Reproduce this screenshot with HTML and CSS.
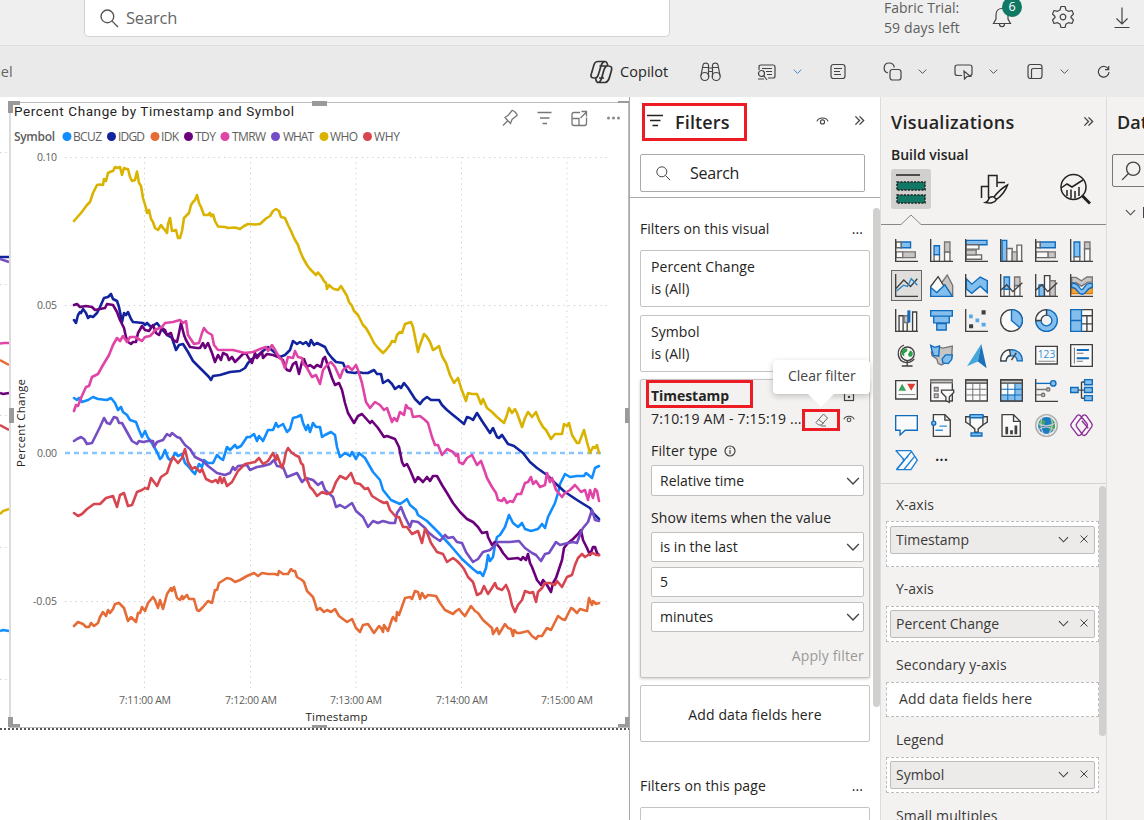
FILE: index.html
```html
<!DOCTYPE html>
<html lang="en">
<head>
<meta charset="utf-8">
<title>Power BI report</title>
<link rel="stylesheet" href="styles.css">
</head>
<body>
<svg class="defs" width="0" height="0">
  <symbol id="chev" viewBox="0 0 12 12"><path d="M1 3.5 6 8.5 11 3.5"/></symbol>
  <symbol id="dbl" viewBox="0 0 12 12"><path d="M1.5 1.5 6 6 1.5 10.5M6 1.5 10.5 6 6 10.5"/></symbol>
  <symbol id="lens" viewBox="0 0 18 18"><circle cx="7" cy="7" r="6"/><path d="M11.5 11.5 17 17"/></symbol>
  <symbol id="eye" viewBox="0 0 14 10"><path d="M1 5.5C2.5 0.5 11.5 0.5 13 5.5"/><circle cx="7" cy="6" r="2.2"/></symbol>
  <symbol id="x" viewBox="0 0 10 10"><path d="M1.5 1.5 8.500 8.500M8.500 1.500 1.500 8.500"/></symbol>
</svg>

<header class="topbar">
  <div class="search"><svg class="i-lens" width="19" height="19"><use href="#lens"/></svg><span>Search</span></div>
  <div class="trial"><span class="t1">Fabric Trial:</span><span class="t2">59 days left</span></div>
  <div class="bell">
    <svg class="ln" width="20" height="22" viewBox="0 0 20 22"><path d="M10 1.500C6 1.500 4 4.500 4 8v4l-2.500 4.500h17L16 12V8C16 4.500 14 1.500 10 1.500ZM7.500 17c0 3.500 5 3.500 5 0"/></svg>
    <span class="badge">6</span>
  </div>
  <svg class="ln gear" width="22" height="24" viewBox="-11 -12 22 24"><path d="M-2-10.500H2L3-7 5.500-5.700 9-6.500 10.500-3 8-0.500V0.500L10.500 3 9 6.500 5.500 5.700 3 7 2 10.500H-2L-3 7-5.500 5.700-9 6.500-10.500 3-8 0.500V-0.500L-10.500-3-9-6.500-5.500-5.700-3-7Z" stroke-linejoin="round"/><circle r="2.800"/></svg>
  <svg class="ln down" width="16" height="22" viewBox="0 0 16 22"><path d="M8 .5V17M2.500 11.500 8 17l5.500-5.500M.5 20.500h15"/></svg>
</header>

<nav class="ribbon">
  <span class="del">del</span>
  <svg class="ln cop" width="24" height="24" viewBox="0 0 24 24"><path d="M9 1.500h7c2 0 2.300 1.500 2.800 4M9 1.500C5 1.500 5 5 3.500 10 2 15 .5 17.500 4.500 18H7M10.500 6h9c4 0 3.500 3 2.500 6-1.500 5-2 10.500-6 10.500H9.500c-3 0-2-2-3-4.500M15.500 2c-3 0-3.500 4-5 9-1.500 5-2 7-4.500 7M18.500 6c-3 0-3.500 4-5 9-1 4-1.500 7-4 7.500M10 18h5"/></svg>
  <span class="coptxt">Copilot</span>
  <svg class="ln g1" width="21" height="20" viewBox="0 0 21 20"><circle cx="4.800" cy="14.500" r="4"/><circle cx="16.200" cy="14.500" r="4"/><path d="M1 13.500 3 3C3.500.5 8 .5 8.500 3v12M20 13.500 18 3C17.500.5 13 .5 12.500 3v12M8.500 6h4M8.500 9.500h4M3 5.500h5.500M12.500 5.500H18"/></svg>
  <svg class="ln g2" width="20" height="18" viewBox="0 0 20 18"><path d="M2 7V4c0-1.500.5-2 2-2h12c1.500 0 2 .5 2 2v9c0 1.500-.5 2-2 2h-5M5 5.500h10M9 8.500h6M10 11.500h5"/><circle cx="4.500" cy="10.500" r="3"/><path d="M6.500 12.500 10 17M1 16h6"/></svg>
  <svg class="ln g3 blue" width="9" height="9"><use href="#chev"/></svg>
  <svg class="ln g4" width="16" height="17" viewBox="0 0 16 17"><rect x="1" y="1.500" width="14" height="14" rx="2.500"/><path d="M4 5.500h8M4 8.500h6M4 11.500h7"/></svg>
  <svg class="ln g5" width="19" height="19" viewBox="0 0 19 19"><rect x="7" y="7.500" width="11" height="10.500" rx="2.500"/><path d="M5 11C-.5 9.500 0 1 6 1c3.500 0 5 2 5.300 4.500"/></svg>
  <svg class="ln g3" width="9" height="9"><use href="#chev"/></svg>
  <svg class="ln g6" width="19" height="17" viewBox="0 0 19 17"><path d="M8 12.500H3.500C2 12.500 1 12 1 10.500V4C1 2.500 2 2 3.500 2h12C17 2 18 2.500 18 4v6.500c0 1.500-.5 2-2 2M10 8l.5 8 2.500-2.500h3.500Z"/></svg>
  <svg class="ln g3" width="9" height="9"><use href="#chev"/></svg>
  <svg class="ln g7" width="16" height="17" viewBox="0 0 16 17"><rect x="1" y="1.500" width="14" height="14" rx="2.500"/><path d="M4.500 15.500v-8c0-1.500.5-2 2-2H15"/></svg>
  <svg class="ln g8" width="9" height="9"><use href="#chev"/></svg>
  <svg class="ln g9" width="13" height="13" viewBox="0 0 13 13"><path d="M11.500 4.500A5.300 5.300 0 1 0 12 7M11.700 1v3.700H8"/></svg>
</nav>

<main class="work">
  <section class="canvas">
    <svg class="chart" width="629" height="723" viewBox="0 97 629 723">
      <g class="other">
        <path class="grid" d="M0 152.500H8M0 284.500H8M0 415.500H8M0 547.500H8M0 679.500H8"/>
        <path stroke="#12239e" d="M0 257H9"/><path stroke="#744ec2" d="M0 259 9 262"/><path stroke="#e044a7" d="M0 343.500 4 343H9"/><path stroke="#e66c37" d="M0 360 9 365"/><path stroke="#6b007b" d="M0 393 3 394 9 393"/><path stroke="#d64550" d="M0 425 9 430"/><path stroke="#d9b300" d="M0 514 3 511 9 509"/><path stroke="#118dff" d="M0 631 3 630 9 631"/>
      </g>
      <path d="M10 103V727" stroke="#dcdcdc" stroke-width="2" fill="none"/>
      <path d="M9 102.500H629M9 727.500H629M628.500 102V728" stroke="#bdbdbd" fill="none"/>
      <path d="M0 729H629" stroke="#555" stroke-width="2" stroke-dasharray="2 2" fill="none"/>
      <g fill="#9a9a9a">
        <path d="M8 101h12v4h-7v8H8ZM312 101h15v5H312ZM618 101h11v2H618ZM8 717h5v7h7v3H8ZM312 725h15v3H312ZM629 717h-4v7h-7v3h11ZM9 408h5v15H9ZM625 408h4v15h-4Z"/>
      </g>
      <text class="ctitle" x="14" y="116" textLength="280">Percent Change by Timestamp and Symbol</text>
      <g class="leg">
        <text x="14" y="141" font-weight="600" textLength="41">Symbol</text>
        <circle cx="67" cy="136.500" r="4.500" fill="#118dff"/><text x="73" y="141" textLength="29">BCUZ</text>
        <circle cx="111.500" cy="136.500" r="4.500" fill="#12239e"/><text x="118" y="141" textLength="27">IDGD</text>
        <circle cx="155" cy="136.500" r="4.500" fill="#e66c37"/><text x="161" y="141" textLength="18">IDK</text>
        <circle cx="188.500" cy="136.500" r="4.500" fill="#6b007b"/><text x="195" y="141" textLength="21">TDY</text>
        <circle cx="225" cy="136.500" r="4.500" fill="#e044a7"/><text x="232" y="141" textLength="34">TMRW</text>
        <circle cx="275.500" cy="136.500" r="4.500" fill="#744ec2"/><text x="283" y="141" textLength="31">WHAT</text>
        <circle cx="324" cy="136.500" r="4.500" fill="#d9b300"/><text x="330" y="141" textLength="28">WHO</text>
        <circle cx="367.500" cy="136.500" r="4.500" fill="#d64550"/><text x="374" y="141" textLength="26">WHY</text>
      </g>
      <g class="tools">
        <path d="M503 125.500 507.500 121M505 117.500l5.500 6 1.500-4 5-4c1-.8-4-6-5-5l-3.500 4.500ZM537.500 112.500h14M540 118h9.500M542.500 123.500h4.500"/>
        <path d="M580 112.500h-6c-1.500 0-2 .5-2 2v9c0 1.500.5 2 2 2h10.500c1.500 0 2-.5 2-2v-6M572 118.500h7v7M580.500 118 586.500 112M581.500 111.500h5v5"/>
        <g class="dots"><circle cx="608.500" cy="118" r="1.500"/><circle cx="613.500" cy="118" r="1.500"/><circle cx="618.500" cy="118" r="1.500"/></g>
      </g>
      <path class="grid" d="M65 157.500H608M65 305.500H608M65 601.500H608M144.500 157V692M250.500 157V692M356 157V692M461.500 157V692M567 157V692"/>
      <g class="ax">
        <text x="37" y="161" textLength="20">0.10</text><text x="37" y="309" textLength="20">0.05</text><text x="37" y="457" textLength="20">0.00</text><text x="33" y="605" textLength="24">-0.05</text>
        <text x="119" y="704" textLength="52">7:11:00 AM</text><text x="225" y="704" textLength="52">7:12:00 AM</text><text x="330" y="704" textLength="52">7:13:00 AM</text><text x="436" y="704" textLength="52">7:14:00 AM</text><text x="541" y="704" textLength="52">7:15:00 AM</text>
      </g>
      <text class="axt" x="305.500" y="721" textLength="62">Timestamp</text>
      <text class="axt" transform="translate(25 467) rotate(-90)" textLength="88">Percent Change</text>
      <path d="M65 453H604" stroke="#118dff" stroke-opacity=".5" stroke-width="2.500" stroke-dasharray="5 4" fill="none"/>
      <g class="series">
        <polyline stroke="#118dff" points="74,398 77,400 79,398 82,402 85,401 88,400 93,397 98,399 107,400 111,398 115,403 118,410 121,407 123,412 127,415 130,420 136,422 139,430 142,437 145,431 148,438 150,440 153,445 157,452 160,459 162,457 165,450 168,458 170,460 172,459 175,453 178,456 182,454 185,463 189,467 192,471 195,474 199,464 202,467 204,460 208,463 213,463 217,455 220,458 223,460 227,447 230,450 235,445 237,448 241,446 247,437 250,437 254,434 257,441 259,436 263,441 268,430 273,430 276,423 278,427 283,424 287,432 290,429 293,418 297,417 301,415 303,423 306,430 308,425 310,432 313,423 316,427 320,427 322,437 325,435 331,432 335,435 337,447 340,457 345,453 350,456 352,452 356,459 359,453 365,458 369,465 373,472 380,480 383,490 391,500 400,504 403,502 407,499 410,505 416,510 418,515 427,521 438,532 450,545 462,559 473,569 478,573 480,572 483,576 486,568 488,555 490,561 493,557 495,545 497,537 500,535 505,527 509,515 513,523 518,527 522,523 525,529 531,531 538,529 542,524 545,528 548,517 555,503 558,493 560,484 565,474 570,477 577,476 584,476 586,473 592,478 595,468 599,466"/>
        <polyline stroke="#12239e" points="74,320 76,323 78,315 80,312 81,313 83,309 86,313 88,318 90,316 93,317 97,313 100,307 104,298 108,297 111,294 113,299 117,301 119,307 122,322 124,313 126,315 128,312 131,319 133,322 143,323 145,325 147,323 151,327 154,325 157,323 160,327 167,335 172,338 176,350 179,345 183,344 188,352 193,361 200,368 205,373 209,377 211,380 213,376 220,375 230,372 240,371 245,368 248,363 252,359 257,356 263,351 268,347 273,351 280,357 285,355 290,350 293,341 297,344 300,342 303,344 306,342 309,346 311,340 314,345 317,343 325,347 328,353 332,358 336,362 343,363 347,372 355,373 358,372 363,373 368,373 374,370 377,374 381,374 383,383 388,380 392,384 395,389 399,386 401,388 404,383 408,388 415,399 420,404 423,400 427,397 431,400 439,400 442,405 447,410 453,415 458,419 464,424 467,417 470,418 473,420 477,413 482,421 488,430 490,433 493,428 497,437 499,438 502,435 508,444 514,446 523,453 530,462 537,468 547,475 555,483 565,492 577,500 585,505 590,508 593,513 599,519"/>
        <polyline stroke="#e66c37" points="74,626 78,622 83,624 86,627 89,627 91,623 94,626 98,623 100,617 103,612 106,616 108,610 110,613 113,609 115,604 119,603 124,608 128,621 131,617 136,622 138,613 140,613 142,607 145,611 148,603 153,597 155,600 158,608 160,600 163,609 167,594 171,588 172,591 174,587 177,598 180,600 182,596 183,599 187,595 189,599 194,599 197,610 199,611 203,607 208,601 212,603 215,590 217,590 219,583 227,578 231,579 235,582 240,580 247,576 254,573 258,576 262,573 268,574 275,574 278,575 279,571 283,574 288,574 291,569 293,571 295,571 297,577 302,580 304,582 307,591 313,597 315,603 317,610 320,608 324,612 327,610 331,612 335,609 339,616 347,622 352,619 356,628 360,632 363,625 368,624 374,633 379,626 381,628 383,632 384,625 388,631 392,619 393,617 396,621 397,612 399,615 405,598 410,597 412,599 415,591 418,592 420,599 422,593 425,598 428,595 436,596 440,603 445,610 453,614 456,611 459,609 462,613 465,616 471,606 475,611 478,613 483,620 492,628 493,634 497,628 499,634 505,624 508,628 511,629 513,636 514,630 517,633 520,633 528,631 532,636 536,639 538,636 542,636 547,628 551,630 558,616 562,619 565,620 571,608 573,609 577,613 580,609 587,611 589,598 592,605 593,601 596,604 599,603"/>
        <polyline stroke="#6b007b" points="74,305 77,304 80,307 86,306 92,307 95,310 100,309 105,308 107,304 113,305 117,312 120,320 124,328 126,337 128,342 131,344 133,342 136,342 138,333 142,326 145,330 149,331 153,325 156,333 159,335 162,328 165,330 167,335 171,333 173,340 177,342 179,333 181,323 184,335 186,340 190,347 197,348 200,348 203,343 205,348 208,343 212,353 215,362 218,355 221,360 223,353 227,355 229,360 232,357 235,362 239,358 243,354 246,353 248,357 252,363 255,353 257,358 262,352 263,358 267,354 273,355 278,357 283,360 285,367 287,370 290,371 293,364 296,362 299,374 302,362 304,359 307,367 310,365 314,368 317,365 321,367 323,359 325,357 328,366 332,378 335,385 339,383 342,390 345,403 348,413 354,423 358,416 362,414 370,423 372,421 378,428 384,437 387,436 395,439 399,447 402,462 404,466 407,464 410,470 415,482 418,477 423,482 427,477 430,481 433,476 437,476 442,485 447,493 453,503 460,512 467,519 473,522 478,527 482,533 487,532 488,537 492,545 495,542 500,548 503,553 508,559 518,558 521,560 523,557 526,560 528,554 530,563 532,567 537,580 541,585 543,580 547,585 551,592 553,583 556,578 558,572 562,560 564,548 568,543 573,539 578,534 581,530 583,540 587,548 590,555 593,547 595,547 597,553 599,555"/>
        <polyline stroke="#e044a7" points="74,411 76,405 78,406 81,398 86,387 89,386 92,377 98,374 103,365 109,355 113,345 117,338 120,341 123,336 127,342 130,337 135,337 142,341 145,337 150,336 153,333 155,330 162,327 165,323 173,322 180,320 183,323 186,321 188,335 190,338 194,344 199,343 202,333 204,328 207,332 212,335 214,345 218,350 225,350 233,350 245,353 253,352 260,349 266,347 268,351 272,345 275,350 279,357 282,360 285,368 288,357 293,358 295,351 298,357 302,358 303,363 307,368 312,377 316,375 320,384 323,370 327,365 331,362 335,367 340,378 343,370 348,366 352,370 356,365 358,370 362,383 366,402 370,408 375,402 380,405 384,410 387,408 392,422 394,418 397,421 400,412 404,415 406,405 408,408 411,409 413,417 420,416 425,420 428,423 432,437 435,445 438,445 442,455 447,449 453,452 456,456 458,454 459,462 463,464 467,458 472,455 477,465 481,461 485,472 487,478 492,487 496,493 498,500 502,501 504,498 507,503 510,501 513,502 517,494 521,494 525,483 528,482 531,477 533,484 536,481 540,487 545,485 547,473 550,482 552,478 556,490 562,497 565,493 570,490 575,485 581,492 585,490 588,500 590,490 593,498 595,489 597,491 599,501"/>
        <polyline stroke="#744ec2" points="74,441 77,439 81,437 84,439 87,444 92,443 97,433 100,427 104,418 107,423 110,424 114,417 117,418 119,423 122,423 127,432 132,441 137,444 139,441 143,442 148,441 153,441 154,447 157,442 163,440 167,434 170,436 172,433 177,437 180,438 185,445 190,449 195,457 203,461 208,466 217,473 225,475 230,473 233,467 235,470 238,466 247,465 250,470 257,467 263,466 270,464 274,460 277,466 283,467 287,477 292,475 297,473 302,482 306,478 313,480 318,485 322,482 325,490 333,497 336,507 340,505 345,508 352,503 356,511 363,517 368,527 373,521 378,523 383,521 390,523 395,523 397,513 401,507 405,517 410,527 412,521 418,522 425,528 428,532 434,537 440,541 445,535 448,538 453,537 457,542 462,543 466,552 473,562 478,559 483,552 490,550 498,542 510,542 519,541 525,548 532,553 536,555 541,561 545,554 549,553 556,542 560,545 568,543 573,542 577,543 581,532 583,528 588,522 592,510 595,520 599,521"/>
        <polyline stroke="#d9b300" points="74,221 77,217.500 81,213 84,209 87,205 90,202 93,193 95,189 97,185 100,184.500 103,185 104,179 106,181 108,173 111,171.500 113,171 115,167 117,168 120,167 122,175 124,168 126,169 128,169 130,177 132,181 135,180 137,171.500 139,183 141,186 143,198 146,208 147,213 149,210 151,219 153,222 155,228 158,230 161,225 163,228 165,230 167,233 168,224 170,218 172,231 176,230 178,238 180,238 182,231 184,218 186,216 189,213 191,205 193,202 195,200 197,195 199,203 201,207 204,215 208,215 210,213 211,216 213,214.500 215,221 218,226.500 225,227 228,228 235,227.500 240,229 244,226 248,224 255,224.500 260,224 266,218.500 270,216 273,211 276,209 279,211 281,217 285,218 288,225 291,231 294,238 298,245 300,251 303,258 307,265 310,269 314,273 316,275 318,272.500 321,276 324,281 326,283 327,289 329,285 331,287 334,289 338,290 341,286 344,291 347,296 349,302 352,306 354,311 358,315 361,321 363,325 366,328 370,335 374,343 378,348 383,353 386,350 390,345 392,341 395,342 397,335 400,332 402,333 405,324 408,323 411,322 413,327 418,352 420,345 424,334 427,337 430,342 433,350 435,349 439,346 442,356 446,363 450,375 454,383 458,378 461,388 466,401 468,393 472,394 477,394 481,404 483,399 487,408 492,412 497,417 504,423 507,415 509,408 512,413 515,409 517,413 522,427 525,418 528,412 532,417 536,412 539,420 543,427 546,430 551,439 555,434 562,434 564,424 567,426 569,423 572,435 577,443 579,443 584,430 587,442 590,453 593,447 595,448 597,445 599,453"/>
        <polyline stroke="#d64550" points="74,513 78,516 82,514 87,509 94,504 100,504 106,498 113,496 117,507 120,495 124,493 128,506 132,505 137,492 142,490 145,488 148,489 151,478 157,486 161,477 167,473 170,464 173,457 178,463 182,458 185,449 188,462 192,469 195,467 200,472 202,469 206,479 212,482 216,480 218,483 220,477 222,483 224,478 227,486 232,482 238,471 245,464 250,463 255,462 259,458 263,464 268,461 273,453 276,460 277,455 282,468 284,462 286,452 288,448 291,452 295,455 299,457 301,463 303,465 305,477 308,482 310,487 313,490 317,496 322,492 327,494 332,492 336,482 340,476 346,479 351,473 355,483 360,484 365,489 368,488 372,496 380,501 384,503 387,502 390,510 396,517 399,517 403,527 407,527 412,534 418,531 422,543 425,529 428,535 431,543 437,552 443,554 447,562 453,558 457,561 460,564 464,569 468,577 473,582 477,595 481,593 484,586 488,594 492,588 495,583 497,588 502,590 506,585 509,592 512,605 515,612 518,605 522,600 525,591 530,593 533,592 536,602 538,592 542,588 545,583 550,583 555,585 557,581 562,587 567,577 572,575 575,565 578,558 582,554 585,557 588,555 593,553 596,555 599,555"/>
      </g>
    </svg>
  </section>

  <aside class="filters">
    <div class="fhead">
      <div class="red fbox"><svg class="ln thick" width="16" height="14" viewBox="0 0 16 14"><path d="M0 1.500h16M3 6.500h10.500M5.500 11.500h5.500"/></svg><b>Filters</b></div>
      <svg class="ln feye" width="13" height="10"><use href="#eye"/></svg>
      <svg class="ln fdbl" width="11" height="11"><use href="#dbl"/></svg>
    </div>
    <div class="fsearch"><svg class="ln" width="15" height="15"><use href="#lens"/></svg><span>Search</span></div>
    <div class="flist">
      <div class="fsec"><span class="s1">Filters on this visual</span><span class="el">...</span></div>
      <div class="card"><p>Percent Change</p><p>is (All)</p></div>
      <div class="card"><p>Symbol</p><p>is (All)</p></div>
      <div class="card open">
        <div class="row1"><b>Timestamp</b><svg class="ln" width="12" height="13" viewBox="0 0 12 13"><rect x="1.500" y="3.500" width="9" height="8"/><path d="M5.500 7.500h1v1h-1z"/></svg></div>
        <div class="row2"><span class="range">7:10:19 AM - 7:15:19 ...</span>
          <svg class="ln er" width="16" height="16" viewBox="0 0 16 16"><path d="M9.500 2 13.500 6 7.500 13H4.500L2 10.500ZM4.500 7.500 9.500 11.500M7 14h5"/></svg>
          <svg class="ln" width="12" height="10"><use href="#eye"/></svg></div>
        <div class="lab l1"><span class="wide">Filter type</span><svg class="ln" width="12" height="12" viewBox="0 0 12 12"><circle cx="6" cy="6" r="5"/><path d="M6 5v4M6 2.800v1.200"/></svg></div>
        <div class="sel"><span>Relative time</span><svg class="ln" width="14" height="14"><use href="#chev"/></svg></div>
        <div class="lab l2"><span class="show">Show items when the value</span></div>
        <div class="sel"><span>is in the last</span><svg class="ln" width="14" height="14"><use href="#chev"/></svg></div>
        <div class="sel"><span>5</span></div>
        <div class="sel"><span>minutes</span><svg class="ln" width="14" height="14"><use href="#chev"/></svg></div>
        <div class="apply"><span class="wide">Apply filter</span></div>
        <div class="red rts"></div><div class="red rer"></div>
        <div class="tip"><span>Clear filter</span></div>
      </div>
      <div class="card add"><span class="adf">Add data fields here</span></div>
      <div class="fsec page"><span class="wide">Filters on this page</span><span class="el">...</span></div>
      <div class="card last"></div>
    </div>
    <div class="fscroll"></div>
  </aside>

  <aside class="viz">
    <div class="vhead"><span class="v1">Visualizations</span><svg class="ln" width="11" height="11"><use href="#dbl"/></svg></div>
    <div class="build"><span class="v2">Build visual</span></div>
    <div class="tabs">
      <div class="tab on"><svg width="30" height="31" viewBox="0 0 30 31"><path d="M0 1h24" stroke="#222" stroke-width="1.500"/><path d="M1 8h28v8H1ZM1 21h28v8H1Z" fill="#117865" stroke="#222" stroke-width="1.500" stroke-dasharray="2.200 1.200"/></svg></div>
      <div class="tab"><svg class="ln tk shift" width="30" height="32" viewBox="0 0 30 32"><path d="M1.500 25V13.500h7V25M8.500 13.500V2.500H17V14M17 9.500h8M27.500 12C22 15 17 20 14 24l2.500 2.500C21 23 26 17 27.500 12ZM14 24c-3-.5-5 .5-5.500 2.500C8 28.500 7 29 5.500 29.500c4 1 9.500.5 11-3"/></svg></div>
      <div class="tab"><svg class="ln tk" width="31" height="32" viewBox="0 0 31 32"><circle cx="13.500" cy="14" r="12.500"/><path d="M1 15 7 11l5 3L23 7M7 23v-6M11 25.500v-9M15 25.500V18M19 23v-9"/><path d="M22 22.500 30 30.500" stroke-width="3"/></svg></div>
    </div>
    <svg class="notch" width="225" height="11" viewBox="0 0 225 11"><path d="M0 10.500H20L30 1 40 10.500H225" fill="none" stroke="#8a8886"/></svg>

    <div class="icons">
      <svg viewBox="0 0 68 68"><path class="b" d="M18 9h28v17H18z"/><path class="w" d="M3 9h15v17H3zM3 38h20v17H3z"/><path class="g" d="M23 38h37v17H23z"/><path class="d" d="M2 0V66H68"/></svg>
      <svg viewBox="0 0 68 68"><path class="g" d="M43 9h16v30H43z"/><path class="w" d="M12 46h16v20H12zM43 39h16v27H43z"/><path class="b" d="M12 20h16v26H12z"/><path class="d" d="M2 0V66H68"/></svg>
      <svg viewBox="0 0 68 68"><path class="b" d="M3 4h62v13H3z"/><path class="w" d="M3 17h38v13H3zM3 47h46v13H3z"/><path class="g" d="M3 33h30v14H3z"/><path class="d" d="M2 0V66H68"/></svg>
      <svg viewBox="0 0 68 68"><path class="b" d="M6 4h14v62H6z"/><path class="w" d="M20 28h16v38H20zM50 18h14v48H50z"/><path class="g" d="M36 38h14v28H36z"/><path class="d" d="M2 0V66H68"/></svg>
      <svg viewBox="0 0 68 68"><path class="b" d="M15 9h45v17H15z"/><path class="w" d="M3 9h12v17H3zM3 38h36v17H3z"/><path class="g" d="M39 38h21v17H39z"/><path class="d" d="M2 0V66H68"/></svg>
      <svg viewBox="0 0 68 68"><path class="b" d="M12 9h17v44H12z"/><path class="g" d="M43 9h16v20H43z"/><path class="w" d="M12 53h17v13H12zM43 29h16v37H43z"/><path class="d" d="M2 0V66H68"/></svg>

      <svg class="on" viewBox="0 0 68 68"><path class="d" d="M2 0V66H68M3 43 26 18 46 37 66 14"/><path d="M5 50 25 33 37 37 48 14 66 33" fill="none" stroke="#2a86c8" stroke-width="4"/></svg>
      <svg viewBox="0 0 68 68"><path class="g" d="M30 66V32L51 3 67 34V66z"/><path class="w dk" d="M2 37 24 8 45 42 30 66H2z"/><path class="b" d="M2 40 20 55 44 32 66 66H2z"/></svg>
      <svg viewBox="0 0 68 68"><path class="b" d="M4 14 20 30 45 9 66 20V55L45 36 20 57 4 44z"/><path class="d" d="M2 0V66H68"/></svg>
      <svg viewBox="0 0 68 68"><path class="g" d="M43 9h16v25H43z"/><path class="w" d="M12 45h16v21H12zM43 35h16v31H43z"/><path class="b" d="M12 9h16v36H12z"/><path class="d" d="M2 0V66H68M3 47 20 32 38 52 66 26"/></svg>
      <svg viewBox="0 0 68 68"><path class="b" d="M12 32h16v34H12z"/><path class="w dk" d="M28 5h16v61H28z"/><path class="g" d="M44 20h16v46H44z"/><path class="d" d="M2 0V66H68M3 47 20 32 38 52 66 26"/></svg>
      <svg viewBox="0 0 68 68"><path d="M5 42H20L34 52 50 42H66V58H5z" fill="#f5a13c" stroke="#d97900" stroke-width="3"/><path class="g" d="M5 10H18L34 20 50 9H66V24H53L34 36 18 26H5z"/><path class="b" d="M5 28C30 24 26 48 35 46 45 44 42 24 66 28V40C48 40 52 60 35 60 20 60 24 40 5 40z"/><path class="d" d="M2 0V66H68"/></svg>

      <svg viewBox="0 0 68 68"><path class="w dk" d="M12 20h12v46H12zM52 9h12v57H52zM24 20h12v46H24z"/><path class="g" d="M27 20h12v20H27z"/><path d="M41 4v36" stroke="#0f6cbd" stroke-width="9"/><path class="d" d="M2 0V66H68"/></svg>
      <svg viewBox="0 0 68 68"><path class="b" d="M2 5h64v16H2zM11 21h46v20H11zM20 43h28v19H20z"/></svg>
      <svg viewBox="0 0 68 68"><path class="d" d="M2 0V66H68"/><path d="M49 4h12v12H49zM12 45h12v12H12z" fill="#404040"/><path d="M12 16h11v11H12zM31 28h11v11H31zM49 41h12v11H49z" fill="#5aa9e6"/></svg>
      <svg viewBox="0 0 68 68"><circle class="w dk" cx="34" cy="34" r="32"/><path class="b" d="M34 2A32 32 0 0 1 58 55L34 34z"/></svg>
      <svg viewBox="0 0 68 68"><path class="b" fill-rule="evenodd" d="M34 2A32 32 0 1 1 2 34H18A16 16 0 1 0 34 18z"/><path class="w dk" d="M2 34A32 32 0 0 1 34 2V18A16 16 0 0 0 18 34z"/></svg>
      <svg viewBox="0 0 68 68"><path class="w dk" d="M2 2h64v64H2zM34 20h32M34 44h32M50 20V66"/><path class="b" d="M2 2h32v64H2zM2 34h32"/></svg>

      <svg viewBox="0 0 68 68"><circle class="w dk" cx="37" cy="29" r="20"/><path d="M28 14c8-3 12 4 6 9-6 4-8 4-6 14-8-2-14-16 0-23ZM44 20c8 0 12 8 6 16-8 6-14-4-10-8Z" fill="#2f9e4a"/><path class="d" d="M36 50V64M20 65H52M26 3C2 12 4 52 34 55 44 55 52 50 57 44"/></svg>
      <svg viewBox="0 0 68 68"><path class="g" d="M28 9 38 12 66 6 64 42 56 50 34 62 24 58 20 44 6 34 4 24z"/><path class="b" d="M2 4 14 10 28 6 26 36 10 34 6 20zM46 32H66L64 46 54 58 38 56 36 44z"/></svg>
      <svg viewBox="0 0 68 68"><path d="M48 0 6 66 38 52z" fill="#45a8dd"/><path d="M48 0 38 52 64 72z" fill="#1b72b8"/></svg>
      <svg viewBox="0 0 68 68"><path class="b" d="M2 50C2 6 66 6 66 50H51C50 30 19 30 18 50z"/><path class="w dk" d="M2 50C2 30 14 18 28 17L31 33C24 35 19 40 18 50z"/><path class="d" d="M48 26 34 48" stroke-width="7"/></svg>
      <svg viewBox="0 0 68 68"><path class="w dk" d="M2 7h64v52H2z"/><text x="8" y="42" font-size="30" textLength="52" fill="#2e8fd6">123</text><path d="M9 51H60" stroke="#888" stroke-width="3"/></svg>
      <svg viewBox="0 0 68 68"><path class="w dk" d="M2 2h64v64H2z"/><path d="M13 10V58M20 27H40M20 51H38" stroke="#777" stroke-width="3"/><path d="M20 18H56M20 42H56" stroke="#0f6cbd" stroke-width="6"/></svg>

      <svg viewBox="0 0 68 68"><path class="w dk" d="M2 5h64v54H2z"/><path d="M10 35 21 14 33 35z" fill="#3fa35b"/><path d="M36 14H60L48 35z" fill="#e03c31"/><path d="M10 46H60" stroke="#888" stroke-width="3"/></svg>
      <svg viewBox="0 0 68 68"><path class="w dk" d="M2 3h64v62H2z"/><path class="g" d="M2 3h64v8H2zM13 25h11v11H13zM13 44h11v11H13z"/><path class="w dk" d="M34 33H70V40L57 53V69L47 64V53L34 40z"/></svg>
      <svg viewBox="0 0 68 68"><path class="w dk" d="M2 3h64v62H2z"/><path d="M4 30H64M4 47H64M23 14V64M44 14V64" stroke="#777" stroke-width="3"/><path class="g dk" d="M2 3h64v9H2z"/></svg>
      <svg viewBox="0 0 68 68"><path class="w" d="M2 3h64v62H2z"/><path d="M2 46H44V12H66V65H2z" fill="#83beec"/><path d="M4 30H64M4 47H64M23 14V64M44 14V64" stroke="#0f6cbd" stroke-width="3"/><path class="d" d="M2 3h64v62H2z"/><path class="g dk" d="M2 3h64v9H2z"/></svg>
      <svg viewBox="0 0 68 68"><path class="d" d="M2 0V66H68"/><path d="M3 31H34M3 47H20" stroke="#777" stroke-width="4"/><path d="M3 13H46" stroke="#0f6cbd" stroke-width="4"/><circle class="b" cx="54" cy="13" r="8"/><circle class="g" cx="39" cy="31" r="5"/><circle class="g" cx="24" cy="47" r="5"/></svg>
      <svg viewBox="0 0 68 68"><path class="d" d="M24 33H42M34 9V57M34 9H44M34 57H44"/><path class="b" d="M2 25h22v15H2zM43 2h23v15H43zM43 25h23v15H43zM43 49h23v15H43z"/></svg>

      <svg viewBox="0 0 68 68"><path d="M2 5H66V48H30L15 62V48H2z" fill="#fafafa" stroke="#0f6cbd" stroke-width="4"/></svg>
      <svg viewBox="0 0 68 68"><path class="w dk" d="M10 2H44L60 18V66H10z"/><path class="d" d="M44 2V18H60"/><path d="M16 48H38M28 36H50" stroke="#2e8fd6" stroke-width="4"/><circle class="b" cx="11" cy="27" r="6"/></svg>
      <svg viewBox="0 0 68 68"><path class="d" d="M15 8H2V24L18 34M53 8H66V24L50 34"/><path class="w dk" d="M15 5H53V32L39 44V54H29V44L15 32z"/><path class="b" d="M15 2H53V11H15zM18 56H50V65H18z"/></svg>
      <svg viewBox="0 0 68 68"><path class="w dk" d="M6 2H40L60 22V66H6z"/><path class="d" d="M40 2V22H60"/><path d="M20 38V60M34 48V60M47 34V60" stroke="#404040" stroke-width="8"/></svg>
      <svg viewBox="0 0 68 68"><circle cx="34" cy="34" r="32" fill="#eee" stroke="#aaa" stroke-width="4"/><circle cx="34" cy="34" r="25" fill="#1b7cc4"/><path d="M12 24C22 10 36 18 28 32L12 40ZM44 12C60 18 64 36 54 48L42 52 40 36 50 30Z" fill="#3da35d"/><path d="M4 25Q34 45 64 25M8 48Q34 28 60 50M24 4Q8 34 28 64M44 4Q62 34 38 64" fill="none" stroke="#ccc" stroke-width="3"/></svg>
      <svg viewBox="0 0 68 68"><path d="M34 9 29 4Q25 1 21 5L4 28Q0 33 4 38L21 60Q25 66 31 62L50 38Q54 33 50 28L34 9 39 4Q44 1 48 5L64 28Q68 33 64 38L48 60Q43 66 38 62L20 38Q16 33 20 28L34 9M35 20 54 42" fill="#fbf7fc" fill-rule="nonzero" stroke="#8b2f97" stroke-width="4" stroke-linejoin="round"/></svg>

      <svg viewBox="0 0 68 68"><path d="M3 5H47L66 33 47 61H5L28 33z" fill="#fafcff" stroke="#1f7fd0" stroke-width="4" stroke-linejoin="round"/><path d="M49 7 5 60M22 31h8M58 22 27 60M34 27l6-8" fill="none" stroke="#1f7fd0" stroke-width="4"/></svg>
      <span class="more">...</span>
    </div>

    <div class="wells">
      <div class="vscroll"></div>
      <div class="wl"><span>X-axis</span></div>
      <div class="well tall"><div class="chip"><span>Timestamp</span><svg class="ln" width="11" height="11"><use href="#chev"/></svg><svg class="ln xx" width="10" height="10"><use href="#x"/></svg></div></div>
      <div class="wl a"><span>Y-axis</span></div>
      <div class="well"><div class="chip"><span>Percent Change</span><svg class="ln" width="11" height="11"><use href="#chev"/></svg><svg class="ln xx" width="10" height="10"><use href="#x"/></svg></div></div>
      <div class="wl b"><span class="sec">Secondary y-axis</span></div>
      <div class="well empty"><span class="adf">Add data fields here</span></div>
      <div class="wl c"><span>Legend</span></div>
      <div class="well"><div class="chip"><span>Symbol</span><svg class="ln" width="11" height="11"><use href="#chev"/></svg><svg class="ln xx" width="10" height="10"><use href="#x"/></svg></div></div>
      <div class="wl d"><span class="wide">Small multiples</span></div>
    </div>
  </aside>

  <aside class="data">
    <div class="dh">Data</div>
    <div class="ds"><svg class="ln flip" width="20" height="20"><use href="#lens"/></svg></div>
    <div class="dr"><svg class="ln" width="11" height="11"><use href="#chev"/></svg><i></i></div>
  </aside>
</main>
</body>
</html>
```

FILE: styles.css
```css
* { box-sizing: border-box; }
html { overflow: hidden; }
body { margin: 0; width: 1144px; height: 820px; overflow: hidden; background: #fff; color: #252423; font: 14px/20px "Open Sans", "Noto Sans", sans-serif; white-space: nowrap; }
p { margin: 0; }
svg { flex: none; display: block; }
.defs { position: absolute; }
.ln { fill: none; stroke: #444; stroke-width: 1.2; }
.thick { stroke-width: 1.7; stroke: #222; }
.blue { stroke: #2b7cd3; }

.topbar { height: 46px; display: flex; align-items: flex-start; background: #efefef; border-bottom: 1px solid #dedede; }
.search { margin-left: 84px; width: 586px; height: 37px; flex: none; display: flex; align-items: center; padding-left: 15px; background: #fff; border: 1px solid #d2d2d2; border-top: 0; border-radius: 0 0 5px 5px; color: #666; font-size: 16.500px; }
.search span { margin-left: 7px; letter-spacing: -.2px; }
.i-lens { fill: none; stroke: #555; stroke-width: 1.300; }
.trial { margin-left: 214px; margin-top: -2px; width: 78px; display: flex; flex-direction: column; color: #605e5c; }
.t2 { letter-spacing: .12px; }
.bell { position: relative; margin-left: 30px; margin-top: 7px; width: 20px; }
.badge { position: absolute; left: 10px; top: -10px; width: 20px; height: 20px; border-radius: 50%; background: #117865; color: #fff; font-size: 12.500px; line-height: 20px; text-align: center; }
.gear { margin: 5px 0 0 40px; }
.down { margin: 7px 0 0 40px; }

.ribbon { height: 51px; display: flex; align-items: center; background: #eaeaea; }
.del { width: 597px; margin-left: -8px; color: #666; flex: none; font-size: 14.500px; }
.ribbon .cop { stroke-width: 1.700; stroke: #333; }
.coptxt { margin-left: 7px; width: 48px; font-size: 14.500px; letter-spacing: .05px; }
.g1 { margin-left: 32px; } .g2 { margin-left: 36px; } .g3 { margin-left: 16px; } .g4 { margin-left: 28px; }
.g5 { margin-left: 37px; } .g6 { margin-left: 27px; } .g7 { margin-left: 29px; } .g8 { margin-left: 17px; } .g9 { margin-left: 28px; }

.work { height: 723px; display: flex; align-items: stretch; overflow: hidden; }
.canvas { width: 629px; flex: none; background: #fff; }
.grid { fill: none; stroke: #d0d0d0; stroke-dasharray: 1.300 4; }
.other path { fill: none; stroke-width: 2.500; }
.other .grid { stroke-width: 1; }
.series polyline { fill: none; stroke-width: 2.600; stroke-linejoin: round; stroke-linecap: round; }
.ctitle { font: 13.500px Roboto, sans-serif; fill: #252423; }
.leg text { font-size: 12px; fill: #605e5c; }
.ax text { font-size: 10.500px; fill: #605e5c; }
.axt { font: 11.500px "Open Sans", sans-serif; fill: #252423; }
.tools path { fill: none; stroke: #777; stroke-width: 1.300; }
.dots { fill: #888; }

.filters { position: relative; width: 251px; flex: none; border-left: 1px solid #a8a8a8; background: #fff; overflow: hidden; }
.red { border: 3px solid #ed1c24; }
.fhead { display: flex; align-items: center; height: 50px; padding-left: 12px; }
.fbox { width: 105px; height: 38px; display: flex; align-items: center; padding-left: 2px; }
.fbox svg { margin-top: -2px; }
.fbox b { margin-left: 12px; font-size: 18px; font-weight: 600; letter-spacing: .15px; }
.feye { margin: -2px 0 0 69px; }
.fdbl { margin: -3px 0 0 25px; stroke-width: 1.500; }
.fsearch { margin: 7px 0 0 10px; width: 225px; height: 38px; border: 1px solid #aaa; border-radius: 2px; display: flex; align-items: center; padding-left: 15px; font-size: 16px; }
.fsearch span { margin-left: 19px; letter-spacing: -.25px; }
.flist { margin-top: 5px; border-top: 1px solid #aaa; padding: 21px 10px 0; }
.fsec { height: 20px; width: 223px; display: flex; justify-content: space-between; margin-bottom: 11px; letter-spacing: .05px; }
.wide { letter-spacing: .15px; }
.show { letter-spacing: .08px; }
.adf { letter-spacing: .12px; }
.sec { letter-spacing: .12px; }
.card { position: relative; width: 230px; height: 57px; margin-bottom: 8px; padding: 6px 10px 0; border: 1px solid #c4c4c4; border-radius: 2px; }
.card p { height: 20px; margin-bottom: 2px; letter-spacing: .06px; }
.fsec + .card + .card { margin-bottom: 7px; }
.card.open { height: 299px; margin-bottom: 7px; padding-top: 5px; background: #f3f2f1; box-shadow: 0 1px 3px rgba(0,0,0,.2); }
.row1 { display: flex; justify-content: space-between; align-items: center; height: 21px; width: 204px; }
.row1 b { letter-spacing: -.05px; }
.row2 { display: flex; align-items: center; height: 25px; }
.range { width: 151px; letter-spacing: .18px; }
.er { margin: 2px 13px 0 12px; stroke-width: 1; stroke: #666; }
.lab { display: flex; align-items: center; gap: 6px; height: 20px; }
.l1 { margin: 10px 0 4px; }
.l2 { margin: 12px 0 4px; }
.sel { width: 213px; height: 30px; margin-bottom: 5px; padding: 0 3px 0 8px; display: flex; align-items: center; justify-content: space-between; background: #fff; border: 1px solid #c0c0c0; border-radius: 2px; }
.sel:nth-of-type(4) { height: 31px; margin-bottom: 0; }
.apply { width: 213px; margin-top: 14px; display: flex; justify-content: flex-end; color: #9b9998; }
.rts { position: absolute; left: 5px; top: 0; width: 107px; height: 28px; }
.rer { position: absolute; left: 161px; top: 29px; width: 38px; height: 22px; }
.tip { position: absolute; left: 132px; top: -20px; width: 97px; height: 34px; background: #fff; border-radius: 4px; box-shadow: 0 2px 6px rgba(0,0,0,.22); color: #444; line-height: 31px; padding-left: 15px; }
.tip::after { content: ""; position: absolute; left: 35px; top: 34px; border: 13px solid transparent; border-top-color: #fff; border-bottom: 0; }
.add { display: flex; align-items: center; justify-content: center; padding: 2px 0 0; }
.page { margin-top: 34px; }
.last { margin-bottom: 0; }
.fscroll { position: absolute; right: 0; top: 111px; width: 7px; height: 499px; border-radius: 4px; background: #d2d0ce; }

.viz { width: 226px; flex: none; background: #f3f2f1; border-left: 1px solid #dcdcdc; overflow: hidden; }
.vhead { height: 24px; margin: 13px 12px 0 10px; display: flex; align-items: center; justify-content: space-between; font-size: 18px; font-weight: 600; letter-spacing: .3px; }
.vhead svg { stroke-width: 1.500; margin-top: -2px; }
.build { margin: 11px 0 4px 10px; height: 20px; font-weight: 600; }
.tabs { display: flex; gap: 42px; padding-left: 10px; height: 43px; }
.tab { width: 40px; height: 40px; display: flex; align-items: center; justify-content: center; border-radius: 3px; }
.tab svg { fill: none; }
.tab.on { background: #d2d0ce; }
.tk { stroke: #222; stroke-width: 1.500; }
.shift { margin-left: 4px; }
.notch { margin-top: 2px; }
.icons { display: grid; grid-template-columns: repeat(6, 35px); grid-auto-rows: 35px; padding: 8px 0 0 8px; height: 258px; align-items: center; justify-items: center; }
.icons svg { width: 23px; height: 23px; overflow: visible; }
.icons svg.on { outline: 1px solid #666; outline-offset: 3px; background: #e1dfdd; box-shadow: 0 0 0 3px #e1dfdd; }
.d { fill: none; stroke: #404040; stroke-width: 4; }
.b { fill: #83beec; stroke: #0f6cbd; stroke-width: 4; }
.g { fill: #c8c6c4; stroke: #7a7574; stroke-width: 4; }
.w { fill: #fafafa; stroke: #666; stroke-width: 4; }
.dk { stroke: #404040; stroke-width: 4; }
.more { font-size: 16px; line-height: 8px; height: 20px; font-weight: 600; }
.wells { position: relative; border-top: 1px solid #d4d2d0; padding: 11px 0 0 5px; color: #3b3a39; }
.wl { height: 20px; padding-left: 10px; margin-bottom: 6px; }
.wl.a { margin-top: 12px; margin-bottom: 7px; }
.wl.b { margin-top: 13px; margin-bottom: 7px; }
.wl.c { margin-top: 13px; margin-bottom: 7px; }
.wl.d { margin-top: 13px; margin-bottom: 0; }
.well { width: 213px; height: 36px; padding: 3px; background: #fff; border: 1px dashed #bdbdbd; }
.well.tall { height: 46px; padding-top: 4px; }
.well.empty { height: 35px; padding: 6px 12px; }
.chip { width: 205px; height: 28px; display: flex; align-items: center; padding: 0 5px; background: #edebe9; border: 1px solid #bcbcbc; border-radius: 2px; }
.chip span { flex: 1; }
.chip svg { margin-top: -2px; }
.chip .xx { margin-left: 10px; stroke-width: 1; }
.vscroll { position: absolute; right: 0; top: 2px; width: 7px; height: 250px; border-radius: 4px; background: #d2d0ce; }

.data { flex: 1; background: #f3f2f1; border-left: 1px solid #dcdcdc; overflow: hidden; }
.dh { margin: 13px 0 0 10px; height: 24px; line-height: 24px; font-size: 18px; font-weight: 600; }
.ds { margin: 20px 0 0 5px; width: 100px; height: 33px; border: 1px solid #777; border-radius: 2px; padding: 6px 8px; }
.flip { transform: scaleX(-1); }
.dr { display: flex; align-items: center; margin: 20px 0 0 18px; gap: 7px; }
.dr i { width: 10px; height: 11px; border: 1px solid #444; }
```
